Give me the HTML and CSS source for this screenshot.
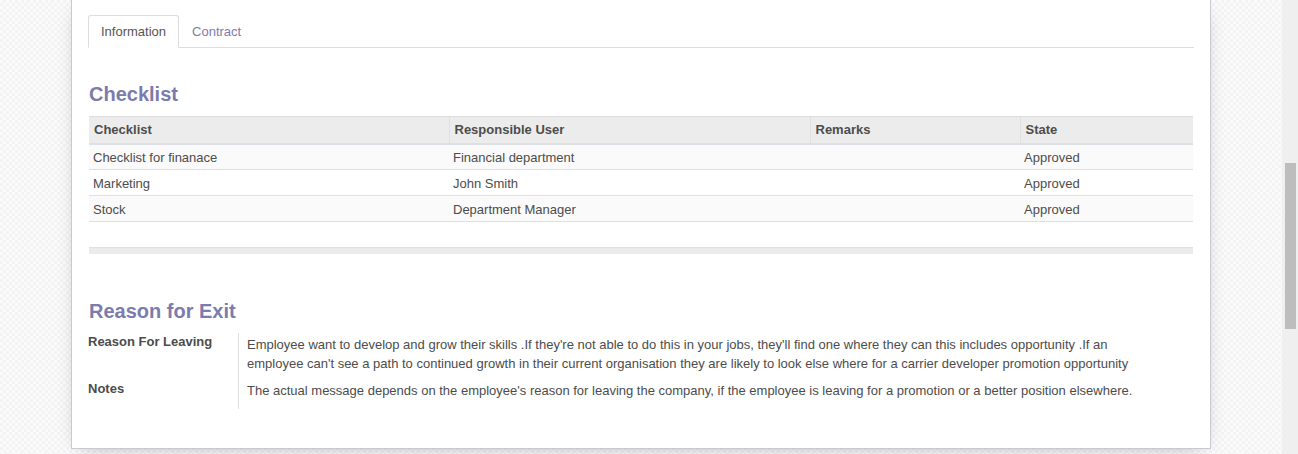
FILE: index.html
```html
<!DOCTYPE html>
<html>
<head>
<meta charset="utf-8">
<link rel="stylesheet" href="styles.css">
</head>
<body>
<div class="viewport">
  <div class="main">
    <div class="sheet">
      <ul class="tabs">
        <li class="tab active">Information</li>
        <li class="tab">Contract</li>
      </ul>

      <h2 class="section-title first">Checklist</h2>
      <table class="list">
        <thead>
          <tr>
            <th class="c1">Checklist</th>
            <th class="c2">Responsible User</th>
            <th class="c3">Remarks</th>
            <th class="c4">State</th>
          </tr>
        </thead>
        <tbody>
          <tr class="odd"><td>Checklist for finanace</td><td>Financial department</td><td></td><td>Approved</td></tr>
          <tr><td>Marketing</td><td>John Smith</td><td></td><td>Approved</td></tr>
          <tr class="odd"><td>Stock</td><td>Department Manager</td><td></td><td>Approved</td></tr>
          <tr class="filler"><td></td><td></td><td></td><td></td></tr>
        </tbody>
        <tfoot>
          <tr><td></td><td></td><td></td><td></td></tr>
        </tfoot>
      </table>

      <h2 class="section-title second">Reason for Exit</h2>
      <div class="group">
        <div class="label">Reason For Leaving</div>
        <div class="value">Employee want to develop and grow their skills .If they're not able to do this in your jobs, they'll find one where they can this includes opportunity .If an employee can't see a path to continued growth in their current organisation they are likely to look else where for a carrier developer promotion opportunity</div>
        <div class="label">Notes</div>
        <div class="value">The actual message depends on the employee's reason for leaving the company, if the employee is leaving for a promotion or a better position elsewhere.</div>
      </div>
    </div>
  </div>
  <div class="scrollbar"><div class="thumb"></div></div>
</div>
</body>
</html>
```

FILE: styles.css
```css
* { box-sizing: border-box; }
html, body {
  margin: 0;
  padding: 0;
  height: 454px;
  overflow: hidden;
}
body {
  font-family: "Liberation Sans", Arial, sans-serif;
  font-size: 13px;
  color: #4c4c4c;
  background-color: #fbfbfb;
  background-image: conic-gradient(#f3f3f3 25%, transparent 0 50%, #f3f3f3 0 75%, transparent 0);
  background-size: 6px 6px;
}
.viewport {
  display: flex;
  height: 454px;
}
.main {
  flex: 1;
  padding-left: 71px;
}
.scrollbar {
  width: 16px;
  background: #efefef;
  padding: 163px 2px 0 3px;
}
.thumb {
  height: 166px;
  background: #bdbdbd;
}
.sheet {
  width: 1140px;
  height: 450px;
  margin-top: -1px;
  background: #fff;
  border: 1px solid #c9c9d4;
  box-shadow: 0 5px 20px -10px rgba(0,0,0,0.4);
  padding: 15px 16px 0 16px;
}
.tabs {
  list-style: none;
  margin: 0;
  padding: 0;
  display: flex;
  border-bottom: 1px solid #ddd;
  width: 1106px;
}
.tab {
  height: 33px;
  line-height: 31px;
  padding: 0 12px;
  margin-bottom: -1px;
  border: 1px solid transparent;
  border-radius: 3px 3px 0 0;
  color: #7c7bad;
}
.tab.active {
  color: #555;
  background: #fff;
  border-color: #ddd #ddd transparent #ddd;
}
.section-title {
  margin: 0;
  color: #7c7bad;
  font-size: 20px;
  font-weight: bold;
  line-height: 24px;
  padding-left: 1px;
}
.section-title.first { margin-top: 34px; }
.section-title.second { margin-top: 45px; }
.list {
  margin-top: 10px;
  margin-left: 1px;
  width: 1104px;
  border-collapse: collapse;
  table-layout: fixed;
}
.list th {
  text-align: left;
  font-weight: bold;
  background: #ececec;
  height: 27px;
  padding: 0 4px 0 5px;
  border-top: 1px solid #ddd;
  border-bottom: 2px solid #dde0e4;
  border-left: 1px solid #e0e0e0;
}
.list th.c1 { width: 360px; border-left: none; }
.list th.c2 { width: 361px; }
.list th.c3 { width: 210px; }
.list td {
  height: 26px;
  padding: 2px 4px 0 4px;
  border-bottom: 1px solid #dde0e4;
}
.list tr.odd td { background: #fafafa; }
.list tfoot td {
  height: 6px;
  padding: 0;
  background: #ebebeb;
  border: none;
}
.group {
  margin-top: 10px;
  display: grid;
  grid-template-columns: 151px 1fr;
}
.label {
  font-weight: bold;
  border-right: 1px solid #ddd;
  padding: 1px 0 0 0;
  line-height: 16px;
}
.label:nth-of-type(1) { padding-bottom: 30px; }
.label:nth-of-type(3) { padding-bottom: 12px; }
.value {
  padding: 2px 60px 0 8px;
  line-height: 19px;
}
.value:last-child { padding-top: 1px; }
```
